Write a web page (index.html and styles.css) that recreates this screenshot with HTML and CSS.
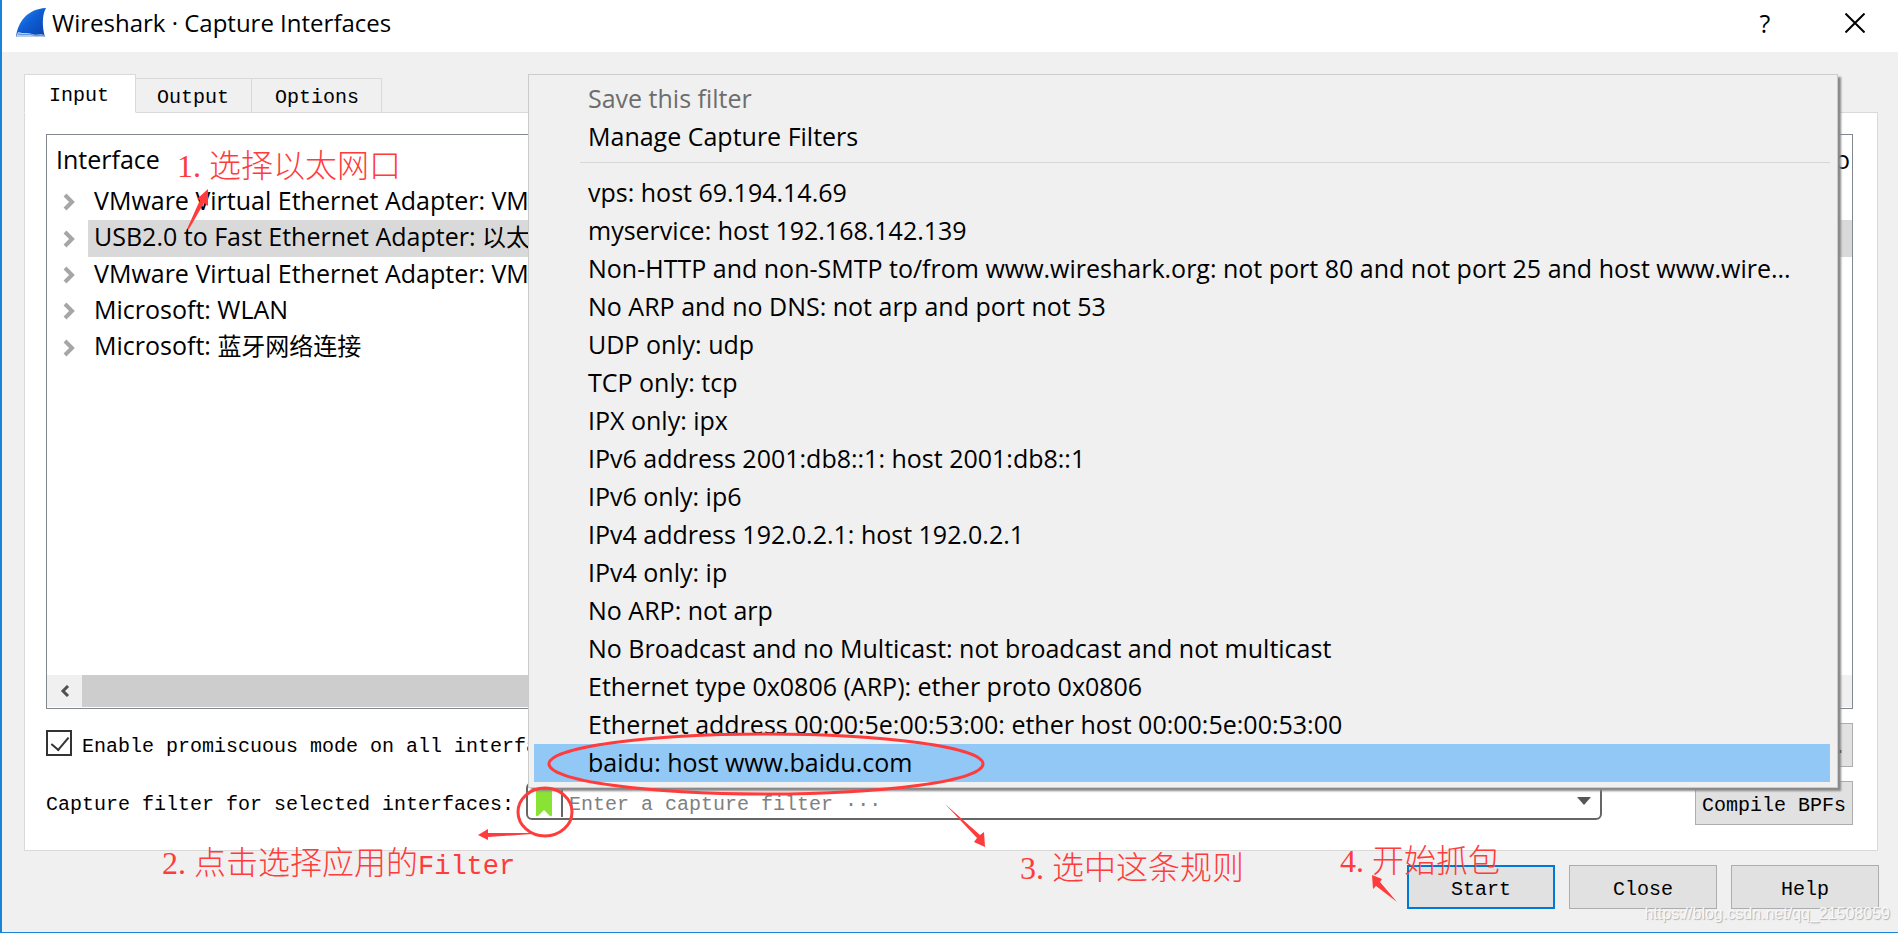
FILE: index.html
```html
<!DOCTYPE html>
<html lang="en">
<head>
<meta charset="utf-8">
<title>Wireshark · Capture Interfaces</title>
<link rel="stylesheet" href="styles.css">
</head>
<body>
<div class="dialog">
  <header class="titlebar">
    <svg class="logo" width="32" height="32" viewBox="0 0 32 32" aria-hidden="true">
      <defs><linearGradient id="fin" x1="0" y1="0" x2="1" y2="1"><stop offset="0" stop-color="#2f9af5"/><stop offset=".45" stop-color="#0f5fd6"/><stop offset="1" stop-color="#0a3fa8"/></linearGradient></defs>
      <path d="M1 30C3 15 12 2 31 1C27 8 27 20 30 30Z" fill="url(#fin)"/>
      <path d="M1 30L3 25C9 27 13 25 17 27S26 26 29 28L30 30Z" fill="#b9cdea"/>
      <path d="M3 27C9 29 13 26 18 28S26 27 29 29" fill="none" stroke="#5f8fd6"/>
    </svg>
    <h1 class="title">Wireshark · Capture Interfaces</h1>
    <button class="caption-button" type="button" aria-label="Help">?</button>
    <button class="caption-button caption-close" type="button" aria-label="Close">
      <svg width="20" height="20" viewBox="0 0 20 20"><path d="M0.500 0.500L19.500 19.500M19.500 0.500L0.500 19.500" stroke="#000" stroke-width="2"/></svg>
    </button>
  </header>

  <nav class="tabs" role="tablist">
    <button class="tab tab-active" type="button" role="tab" aria-selected="true">Input</button>
    <button class="tab" type="button" role="tab">Output</button>
    <button class="tab" type="button" role="tab">Options</button>
  </nav>

  <main class="panel">
    <div class="list">
      <table class="interfaces">
        <colgroup><col class="col-toggle"><col><col class="col-promisc"></colgroup>
        <thead><tr><th colspan="2">Interface</th><th class="promisc">Pro</th></tr></thead>
        <tbody>
          <tr><td class="toggle"><svg class="chevron" viewBox="0 0 12 18"><path d="M2 2L9 9L2 16"/></svg></td><td>VMware Virtual Ethernet Adapter: VMware</td><td></td></tr>
          <tr class="selected"><td class="toggle"><svg class="chevron" viewBox="0 0 12 18"><path d="M2 2L9 9L2 16"/></svg></td><td>USB2.0 to Fast Ethernet Adapter: <span class="cjk">以太网</span></td><td></td></tr>
          <tr><td class="toggle"><svg class="chevron" viewBox="0 0 12 18"><path d="M2 2L9 9L2 16"/></svg></td><td>VMware Virtual Ethernet Adapter: VMware</td><td></td></tr>
          <tr><td class="toggle"><svg class="chevron" viewBox="0 0 12 18"><path d="M2 2L9 9L2 16"/></svg></td><td>Microsoft: WLAN</td><td></td></tr>
          <tr><td class="toggle"><svg class="chevron" viewBox="0 0 12 18"><path d="M2 2L9 9L2 16"/></svg></td><td>Microsoft: <span class="cjk">蓝牙网络连接</span></td><td></td></tr>
        </tbody>
      </table>
      <div class="scrollbar">
        <button class="scroll-button" type="button" aria-label="Scroll left"><svg width="10" height="12" viewBox="0 0 10 12"><path d="M8 1L3 6L8 11"/></svg></button>
        <div class="scroll-thumb"></div>
        <button class="scroll-button" type="button" aria-label="Scroll right"><svg width="10" height="12" viewBox="0 0 10 12"><path d="M2 1L7 6L2 11"/></svg></button>
      </div>
    </div>

    <div class="row">
      <input class="check" type="checkbox" id="promiscuous" checked>
      <label class="row-label" for="promiscuous">Enable promiscuous mode on all interfaces</label>
      <button class="button row-end" type="button">Manage Interfaces...</button>
    </div>

    <div class="row">
      <label class="row-label" for="filter">Capture filter for selected interfaces:</label>
      <div class="filter">
        <button class="bookmark" type="button" aria-label="Filter bookmarks"><svg width="16" height="32" viewBox="0 0 16 32"><path d="M0 0H16V30Q16 32 14 31L8 25L2 31Q0 32 0 30Z" fill="#8ae234"/></svg></button>
        <input class="filter-input" type="text" id="filter" placeholder="Enter a capture filter ···">
        <button class="drop" type="button" aria-label="Recent filters"><svg width="14" height="8" viewBox="0 0 14 8"><path d="M0 0H14L7 8Z" fill="#555753"/></svg></button>
      </div>
      <button class="button row-end compile" type="button">Compile BPFs</button>
    </div>
  </main>

  <footer class="footer">
    <button class="button action action-default" type="button">Start</button>
    <button class="button action" type="button">Close</button>
    <button class="button action" type="button">Help</button>
    <span class="watermark">https://blog.csdn.net/qq_21508059</span>
  </footer>

  <div class="menu" role="menu">
    <button class="item" type="button" role="menuitem" disabled>Save this filter</button>
    <button class="item" type="button" role="menuitem">Manage Capture Filters</button>
    <hr class="separator">
    <button class="item" type="button" role="menuitem">vps: host 69.194.14.69</button>
    <button class="item" type="button" role="menuitem">myservice: host 192.168.142.139</button>
    <button class="item" type="button" role="menuitem">Non-HTTP and non-SMTP to/from www.wireshark.org: not port 80 and not port 25 and host www.wire...</button>
    <button class="item" type="button" role="menuitem">No ARP and no DNS: not arp and port not 53</button>
    <button class="item" type="button" role="menuitem">UDP only: udp</button>
    <button class="item" type="button" role="menuitem">TCP only: tcp</button>
    <button class="item" type="button" role="menuitem">IPX only: ipx</button>
    <button class="item" type="button" role="menuitem">IPv6 address 2001:db8::1: host 2001:db8::1</button>
    <button class="item" type="button" role="menuitem">IPv6 only: ip6</button>
    <button class="item" type="button" role="menuitem">IPv4 address 192.0.2.1: host 192.0.2.1</button>
    <button class="item" type="button" role="menuitem">IPv4 only: ip</button>
    <button class="item" type="button" role="menuitem">No ARP: not arp</button>
    <button class="item" type="button" role="menuitem">No Broadcast and no Multicast: not broadcast and not multicast</button>
    <button class="item" type="button" role="menuitem">Ethernet type 0x0806 (ARP): ether proto 0x0806</button>
    <button class="item" type="button" role="menuitem">Ethernet address 00:00:5e:00:53:00: ether host 00:00:5e:00:53:00</button>
    <button class="item item-active" type="button" role="menuitem">baidu: host www.baidu.com</button>
  </div>

  <svg class="marks" width="1000" height="933" viewBox="0 0 1000 933" aria-hidden="true">
    <path d="M187 229L200 200L197 199L208 189L208 206L204 203L189 229Z"/>
    <path d="M532 833L488 833L488 829L478 835L488 840L488 837L532 834Z"/>
    <path d="M945 804L980 835L984 832L985 847L974 842L977 838Z"/>
    <ellipse cx="766" cy="764" rx="217" ry="30"/>
    <ellipse cx="545" cy="812" rx="27" ry="24"/>
  </svg>
  <svg class="marks marks-start" width="26" height="28" viewBox="0 0 26 28" aria-hidden="true">
    <path d="M0 0L10 4L8 7L25 27L4 11L1 14Z"/>
  </svg>
  <p class="note note-1"><span class="step">1.</span>选择以太网口</p>
  <p class="note note-2"><span class="step">2.</span>点击选择应用的<span class="latin">Filter</span></p>
  <p class="note note-3"><span class="step">3.</span>选中这条规则</p>
  <p class="note note-4"><span class="step">4.</span>开始抓包</p>
</div>
</body>
</html>
```
FILE: styles.css
```css
:root {
  --ui: "Open Sans", "Noto Sans CJK SC", sans-serif;
  --mono: "Liberation Mono", "Noto Sans CJK SC", monospace;
  --face: #f0f0f0;
  --line: #d9d9d9;
  --red: #ff3b3b;
}

* { box-sizing: border-box; }

body {
  margin: 0;
  font: 25px/36px var(--ui);
  color: #000;
}

button, input {
  margin: 0;
  padding: 0;
  border: 0;
  background: none;
  font: inherit;
  color: inherit;
}

.dialog {
  position: relative;
  display: flex;
  flex-direction: column;
  min-height: 100vh;
  overflow: hidden;
  background: var(--face);
  border-left: 2px solid #1883d7;
  border-bottom: 1px solid #1883d7;
}

.titlebar {
  display: flex;
  align-items: center;
  height: 52px;
  padding: 0 0 6px 13px;
  background: #fff;
}

.logo { margin-right: 5px; }

.title {
  flex: 1;
  margin: 0;
  font-size: 24px;
  font-weight: 400;
}

.caption-button {
  display: flex;
  align-items: center;
  justify-content: center;
  width: 94px;
  height: 46px;
}

.caption-close { width: 86px; }

.tabs {
  display: flex;
  align-items: flex-end;
  height: 61px;
  padding-left: 22px;
}

.tab {
  position: relative;
  height: 35px;
  padding: 5px 22px 0 21px;
  border: 1px solid var(--line);
  border-left: 0;
  font: 20px/28px var(--mono);
}

.tab:last-child { padding-left: 23px; }

.tab-active {
  z-index: 1;
  height: 39px;
  padding: 4px 26px 0 24px;
  border-left: 1px solid var(--line);
  border-bottom-color: #fff;
  background: #fff;
}

.panel {
  flex: 1;
  display: flex;
  flex-direction: column;
  margin: -1px 20px 0 22px;
  padding: 21px 24px 25px 21px;
  background: #fff;
  border: 1px solid var(--line);
}

.list {
  flex: 1;
  display: flex;
  flex-direction: column;
  justify-content: space-between;
  border: 1px solid #828790;
}

.interfaces {
  width: 100%;
  table-layout: fixed;
  border-collapse: collapse;
}

.col-toggle { width: 41px; }
.col-promisc { width: 120px; }

.interfaces th {
  height: 49px;
  padding: 6px 2px 7px 9px;
  font-weight: 400;
  text-align: left;
}

.interfaces .promisc { text-align: right; }

.interfaces td {
  height: 36px;
  padding: 0 0 4px 6px;
  line-height: 32px;
  white-space: nowrap;
}

.interfaces .toggle { padding: 0 0 0 16px; }
.selected td:not(.toggle) { background: #d9d9d9; }
.cjk { font-size: 24px; }

.chevron {
  display: block;
  width: 12px;
  height: 18px;
  fill: none;
  stroke: #a6a6a6;
  stroke-width: 4;
}

.scrollbar {
  display: flex;
  height: 33px;
  background: var(--face);
  border-bottom: 1px solid #fff;
}

.scroll-button {
  width: 35px;
  display: flex;
  align-items: center;
  justify-content: center;
}

.scroll-button svg {
  fill: none;
  stroke: #505050;
  stroke-width: 3;
}

.scroll-thumb {
  flex: 1;
  margin-right: 80px;
  background: #cdcdcd;
}

.row {
  display: flex;
  align-items: center;
  height: 44px;
  margin-top: 14px;
  font: 20px/24px var(--mono);
  white-space: nowrap;
}

.row-label { padding-top: 4px; }
.row-end { margin-left: auto; }

.check {
  appearance: none;
  width: 26px;
  height: 26px;
  margin: 0 10px 4px 0;
  border: 2px solid #333;
  background: #fff;
  position: relative;
}

.check:checked::after {
  content: "";
  position: absolute;
  left: 7px;
  top: 1px;
  width: 8px;
  height: 15px;
  border: solid #333;
  border-width: 0 2px 2px 0;
  transform: rotate(40deg);
}

.button {
  height: 44px;
  padding: 5px 6px 0;
  border: 1px solid #adadad;
  background: #e1e1e1;
  font: 20px/24px var(--mono);
}

.filter {
  flex: 1;
  display: flex;
  align-items: center;
  height: 38px;
  margin: 0 93px 4px 12px;
  border: 2px solid #666;
  border-radius: 6px;
}

.bookmark {
  display: flex;
  align-items: center;
  width: 35px;
  height: 32px;
  padding-left: 8px;
  border-right: 2px solid #666;
}

.filter-input {
  flex: 1;
  min-width: 0;
  padding: 8px 0 0 6px;
  outline: 0;
}

.filter-input::placeholder {
  color: #808080;
  opacity: 1;
}

.drop { width: 31px; }
.drop svg { display: block; margin-left: 8px; }

.compile { width: 158px; }

.footer {
  position: relative;
  display: flex;
  justify-content: flex-end;
  gap: 14px;
  padding: 14px 19px 23px;
}

.action { width: 148px; }
.action-default { border: 2px solid #0078d7; }

.watermark {
  position: absolute;
  right: 8px;
  bottom: 8px;
  font: 16px/20px "Liberation Sans", sans-serif;
  color: #f8f8f8;
  text-shadow: 1px 1px 1px #b0b0b0;
}

.menu {
  position: absolute;
  top: 74px;
  left: 526px;
  right: 60px;
  padding: 5px 7px 5px 5px;
  background: var(--face);
  border: 1px solid #ccc;
  box-shadow: 3px 3px 2px #888;
}

.item {
  display: block;
  width: 100%;
  height: 38px;
  padding: 0 20px 2px 54px;
  text-align: left;
  white-space: nowrap;
}

.item:disabled { color: #6d6d6d; }
.item-active { background: #91c8f6; }

.separator {
  margin: 6px 0 11px 46px;
  border: 0;
  border-top: 1px solid #d7d7d7;
}

.marks {
  position: absolute;
  top: 0;
  left: -2px;
  pointer-events: none;
}

.marks path { fill: var(--red); }

.marks ellipse {
  fill: none;
  stroke: var(--red);
  stroke-width: 3;
}

.marks-start {
  top: 875px;
  left: auto;
  right: 500px;
}

.note {
  position: absolute;
  margin: 0;
  font: 300 32px/40px "Noto Sans CJK SC", sans-serif;
  color: var(--red);
  white-space: nowrap;
}

.step {
  padding-right: 8px;
  font-family: "Liberation Serif", serif;
}

.latin { font: 27px/40px var(--mono); }

.note-1 { top: 143px; left: 175px; }
.note-2 { top: 840px; left: 160px; }
.note-3 { top: 845px; left: 1018px; }
.note-4 { top: 838px; right: 398px; }
```
